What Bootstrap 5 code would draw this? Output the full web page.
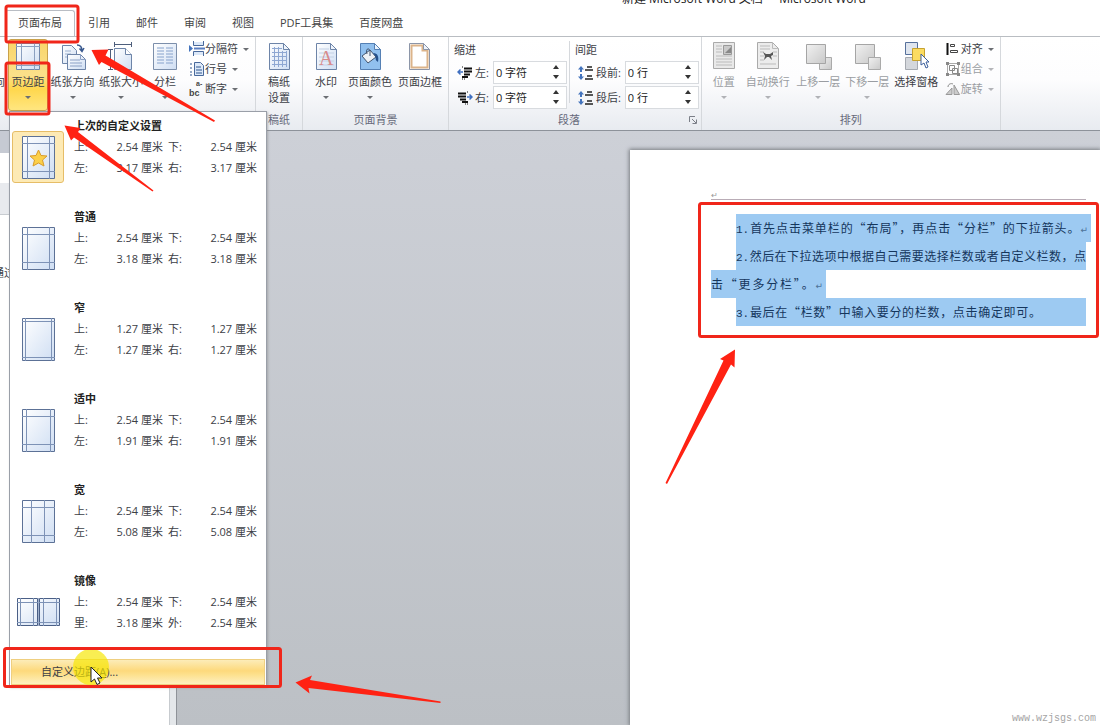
<!DOCTYPE html>
<html lang="zh-CN">
<head>
<meta charset="utf-8">
<meta name="viewport" content="width=device-width, initial-scale=1">
<title>新建 Microsoft Word 文档 - Microsoft Word</title>
<link href="https://cdn.jsdelivr.net/npm/bootstrap@5.3.0/dist/css/bootstrap.min.css" rel="stylesheet">
<style>
body{font-family:"Open Sans","Noto Sans CJK SC",sans-serif;font-size:11px;line-height:16px;color:#3c4046;background:#fff;overflow:hidden}
button{font:inherit;color:inherit;background:none;border:0;padding:0}
svg{display:block;flex:none}
.titleline{height:8px;padding-left:622px;font-size:12px;line-height:18px;color:#222}
.tabs{height:28px;padding:2px 0 0 5px}
.tabs a{padding:0 13px;line-height:26px;color:#444;text-decoration:none;white-space:nowrap}
.tabs a.active{border:1px solid #b9bdc4;border-bottom:0;border-radius:3px 3px 0 0;padding:0 12px;line-height:24px;background:#fff}
.ribbon{border-top:1px solid #b9bdc2;border-bottom:1px solid #8d929a;height:95px;background:linear-gradient(#fff 0,#fdfdfe 45%,#e8ebf0 100%)}
.grp{border-right:1px solid #d5d8dc;padding-top:2px;height:93px}
.grp-body{height:73px}
.caption{line-height:16px;color:#66697a;text-align:center}
.big{width:49px;height:72px;padding-top:1px;display:flex;flex-direction:column;align-items:center;white-space:nowrap}
.big>span{line-height:16px;margin-top:2px}
.big::after,.small-btn::after{content:"";border:3px solid transparent;border-top-color:#6b6e73;border-bottom:0;margin-top:6px}
.big.plain::after{display:none}
.w-cut{width:8px;align-items:flex-end;padding-right:3px;overflow:hidden}
.w-40{width:40px}.w-44{width:44px}.w-46{width:46px}.w-48{width:48px}.w-52{width:52px}
.hot{background:linear-gradient(#f9d568,#fbe08a 50%,#ffd74d 70%,#ffe680);border:1px solid #c9a14a;border-radius:3px;padding-top:0}
.off{color:#9a9da2}
.off::after{opacity:.5}
.small-col{padding:0 6px 0 4px}
.small-btn{display:flex;align-items:center;height:20px;white-space:nowrap}
.small-btn::after{margin:0 0 0 5px}
.bg-body-group{padding:0 2px 0 3px}
.indent-col{padding:1px 2px 0 5px;line-height:20px}
.split{border-left:1px solid #d5d8dc;height:62px;margin-top:2px}
.field{height:23px;margin-bottom:2px;padding-left:3px}
.field:first-of-type{margin-top:1px}
.field label{padding:0 4px 0 2px;line-height:20px;white-space:nowrap}
.spin{width:74px;height:23px;border:1px solid #d8dbdf;background:#fff}
.spin input{width:52px;border:0;padding:0 2px;background:none;color:#222;font:inherit;outline:0}
.spin-btns{width:20px}
.spin-btns button{height:10px;display:flex;align-items:center;justify-content:center}
.stage{background:linear-gradient(#cdd0d7,#bcc0c5)}
.navpane{width:169px;background:linear-gradient(#c6cad3 0 22px,#fff 22px 52px,#e8eaee 52px 83px,#c8ccd1 83px 84px,#fff 84px)}
.navpane p{margin:134px 0 0 -7px}
.splitter{width:8px;background:#e4e7ea;border-left:1px solid #c7cbcf;border-right:1px solid #8e9298}
.paper{flex:0 1 470px;margin-top:19px;background:#fff;padding:40px 9px 0 81px;box-shadow:0 0 4px 1px #777b80}
.doc-head{height:10px;border-bottom:1px solid #b9acb6;margin:0 5px 14px 0;font-size:8px;line-height:10px;color:#999}
.doc{font-family:"Noto Sans CJK SC",sans-serif;font-size:12px;line-height:28px;color:#15365c}
.doc p{margin:0}
.ln{display:block;height:28px;background:#9dcaf2;margin:0 5px 0 25px;text-align:justify;text-align-last:justify;white-space:nowrap}
.ln.wide{margin-right:0;padding-right:3px}
.ln.brk{width:115px;margin-left:0;padding-right:3px}
.ln.short{padding-right:45px}
.ln b{font:11px/26px "Liberation Mono",monospace}
.ln i{font:normal 9px/26px "DejaVu Sans",sans-serif;color:#4c7196}
.gallery{position:absolute;left:9px;top:111px;width:258px;background:#fff;border:1px solid #9a9fa8;padding:3px 0 1px;box-shadow:1px 1px 2px #8888}
.preset{display:flex;width:100%;padding:0 9px 0 2px;margin-bottom:23px;text-align:left;line-height:21px}
.preset.last{margin-bottom:21px}
.thumb{width:52px;height:52px;margin:16px 10px 0 0;display:flex;align-items:center;justify-content:center}
.thumb.sel{background:#fdeab5;border:1px solid #e6bd67;border-radius:3px}
.preset strong{display:block;color:#222}
.vals{display:flex;gap:5px;height:21px}
.vals>span{flex:1;display:flex;justify-content:space-between}
.custom{margin:0 1px;height:26px;text-align:left;padding-left:29px;border:1px solid #efcf80;background:linear-gradient(#fcecb8,#fdd97c 45%,#fde08c 60%,#fef0c0)}
.marks{position:absolute;left:0;top:0;pointer-events:none}
.site{position:absolute;right:4px;bottom:0;font:10px/12px "Liberation Mono",monospace;color:#a5a5a5}
</style>
</head>
<body>
<svg width="0" height="0" class="position-absolute" aria-hidden="true">
<defs>
<linearGradient id="pg" x1="0" y1="0" x2="1" y2="1"><stop offset="0" stop-color="#fff"/><stop offset="1" stop-color="#cfdef3"/></linearGradient>
<linearGradient id="gr" x1="0" y1="0" x2="1" y2="1"><stop offset="0" stop-color="#f1f1f1"/><stop offset="1" stop-color="#c9c9c9"/></linearGradient>
<symbol id="sheet" viewBox="0 0 32 32"><path d="M6.500 3.500h14l6 6v20h-20z" fill="url(#pg)" stroke="#6d84a8"/><path d="M20.500 3.500v6h6z" fill="#eef4fc" stroke="#6d84a8"/></symbol>
<symbol id="ind" viewBox="0 0 16 14"><path d="M5 1h2M5 13h3" stroke="#111" stroke-dasharray="1 1"/><path d="M7 2.500h8M7 5.500h8M7 8.500h6M5 11h6" stroke="#111" stroke-width="2"/><path d="M1 6h5M3.500 3.500L1 6l2.500 2.500" stroke="#3f6fc0" fill="none" stroke-width="1.500"/></symbol>
<symbol id="space" viewBox="0 0 16 16"><path d="M9 2h5M7 5h8M9 11h5M7 14h8" stroke="#222" stroke-width="1.500"/><path d="M0 4.500L3 1l3 3.500zM0 11.500L3 15l3-3.500z" fill="#4474bd"/><path d="M3 4v3M3 9v3" stroke="#4474bd" stroke-width="2"/></symbol>
<symbol id="up" viewBox="0 0 6 4"><path d="M0 4L3 0l3 4z" fill="#333"/></symbol>
<symbol id="dn" viewBox="0 0 6 4"><path d="M0 0h6L3 4z" fill="#333"/></symbol>
</defs>
</svg>

<div class="d-flex flex-column vh-100 position-relative">
<header>
<div class="titleline d-flex align-items-end text-nowrap">新建 Microsoft Word 文档 &nbsp;- &nbsp;Microsoft Word</div>
<nav class="tabs d-flex">
<a href="#" class="active">页面布局</a><a href="#">引用</a><a href="#">邮件</a><a href="#">审阅</a><a href="#">视图</a><a href="#">PDF工具集</a><a href="#">百度网盘</a>
</nav>
</header>

<div class="ribbon d-flex flex-shrink-0">
<section class="grp">
<div class="grp-body d-flex">
<button class="big w-cut plain"><svg width="32" height="32"></svg><span>文字方向</span></button>
<button class="big w-40 hot"><svg width="32" height="32"><path d="M4.500 3.500h23v26h-23z" fill="url(#pg)" stroke="#7288aa"/><path d="M9.500 3v27M22.500 3v27M4 6.500h24M4 25.500h24" stroke="#8ba0c0"/></svg><span>页边距</span></button>
<button class="big"><svg width="32" height="32"><path d="M5.500 5.500h9l5 5v13h-14z" fill="url(#pg)" stroke="#6d84a8"/><path d="M8 11h6M8 14h6M8 17h4" stroke="#9fb3d0"/><path d="M10.500 14.500h13l5 5v10h-18z" fill="url(#pg)" stroke="#6d84a8"/><path d="M23.500 14.500v5h5M13 20h10M13 23h12M13 26h12" fill="none" stroke="#8ba0c5"/><path d="M20 5c4 0 5 3 5 6M22.500 8.500l2.500 3 2-3.500" fill="none" stroke="#38588e" stroke-width="1.500"/></svg><span>纸张方向</span></button>
<button class="big w-48"><svg width="32" height="32"><path d="M9.500 8.500h11l6 6v15h-17z" fill="url(#pg)" stroke="#6d84a8"/><path d="M20.500 8.500v6h6" fill="#fff" stroke="#6d84a8"/><path d="M9 4.500h17M9.500 2v5M26.500 2v5M5.500 9v20M3 9.500h5M3 29.500h5" stroke="#4d5e7c"/></svg><span>纸张大小</span></button>
<button class="big w-40"><svg width="32" height="32"><path d="M4.500 3.500h23v26h-23z" fill="url(#pg)" stroke="#7c8fab"/><path d="M8 8h7M8 11h7M8 14h7M8 17h7M8 20h7M8 23h7M17 8h7M17 11h7M17 14h7M17 17h7M17 20h7M17 23h7" stroke="#86a2cc"/></svg><span>分栏</span></button>
<div class="small-col">
<button class="small-btn"><svg width="16" height="16"><path d="M5 1h10v4H5zM5 10h10v4H5z" fill="#dce8f8"/><path d="M4.500 0v4.500h10V0M4.500 15v-4.500h10V15" fill="none" stroke="#49699b"/><path d="M5 7.500h11" stroke="#5a7ec0" stroke-width="2"/><path d="M0 4l4 3.500L0 11z" fill="#4474bd"/></svg>分隔符</button>
<button class="small-btn"><svg width="16" height="16"><path d="M5.500 1.500h6l3 3v10h-9z" fill="#dce8f8" stroke="#49699b"/><path d="M7 6h5M7 9h6M7 12h6M1 3h2M1 7h2M1 11h2M1 14h2" stroke="#31568f"/></svg>行号</button>
<button class="small-btn"><svg width="16" height="16" font-family="Liberation Sans" font-weight="bold" fill="#444"><text x="0" y="15" font-size="9">bc</text><text x="7" y="5" font-size="7">a-</text></svg>断字</button>
</div>
</div>
</section>
<section class="grp">
<div class="grp-body d-flex"><button class="big w-46 plain"><svg width="32" height="32"><use href="#sheet"/><path d="M9 8.500h10M9 12.500h15M9 16.500h15M9 20.500h15M9 24.500h15M11.500 7v20M15.500 7v20M19.500 11v16M23.500 11v16" stroke="#8ea7d2"/></svg><span>稿纸<br>设置</span></button></div>
<div class="caption">稿纸</div>
</section>
<section class="grp">
<div class="grp-body bg-body-group d-flex">
<button class="big w-40"><svg width="32" height="32"><use href="#sheet"/><path d="M9 9h10M9 13h15M9 17h15M9 21h15M9 25h15" stroke="#c3d0e4"/><text x="9" y="25" font-family="Liberation Serif" font-size="20" fill="#d88b8b">A</text></svg><span>水印</span></button>
<button class="big w-48"><svg width="32" height="32"><path d="M6.500 3.500h14l6 6v20h-20z" fill="#91c0ee" stroke="#5580b4"/><path d="M20.500 3.500v6h6z" fill="#e9f3fd" stroke="#5580b4"/><path d="M8 16l8-6 6 7-8 6z" fill="#eef1f5" stroke="#42546e"/><path d="M13 14c-2-5 2-7 3-3v5" fill="none" stroke="#42546e"/><path d="M19 13c5 0 6 4 5 9-2-1-3-3-2-5z" fill="#244f8a"/></svg><span>页面颜色</span></button>
<button class="big w-52 plain"><svg width="32" height="32"><path d="M5.500 3.500h14l6 6v20h-20z" fill="#fff" stroke="#8b95a8"/><path d="M7.500 5.500h11v5h5v17h-16z" fill="#fff" stroke="#dcb48a" stroke-width="2"/><path d="M19.500 3.500v6h6z" fill="#eef4fc" stroke="#8b95a8"/></svg><span>页面边框</span></button>
</div>
<div class="caption">页面背景</div>
</section>
<section class="grp">
<div class="grp-body d-flex">
<div class="indent-col">缩进
<div class="field d-flex align-items-center"><svg width="16" height="14"><use href="#ind"/></svg><label for="il">左:</label><div class="spin d-flex"><input id="il" value="0 字符"><div class="spin-btns"><button class="w-100" aria-label="增加"><svg width="6" height="4"><use href="#up"/></svg></button><button class="w-100" aria-label="减少"><svg width="6" height="4"><use href="#dn"/></svg></button></div></div></div>
<div class="field d-flex align-items-center"><svg width="16" height="14"><g transform="translate(16 0) scale(-1 1)"><use href="#ind"/></g></svg><label for="ir">右:</label><div class="spin d-flex"><input id="ir" value="0 字符"><div class="spin-btns"><button class="w-100" aria-label="增加"><svg width="6" height="4"><use href="#up"/></svg></button><button class="w-100" aria-label="减少"><svg width="6" height="4"><use href="#dn"/></svg></button></div></div></div>
</div>
<div class="split"></div>
<div class="indent-col">间距
<div class="field d-flex align-items-center"><svg width="16" height="16"><use href="#space"/></svg><label for="sb">段前:</label><div class="spin d-flex"><input id="sb" value="0 行"><div class="spin-btns"><button class="w-100" aria-label="增加"><svg width="6" height="4"><use href="#up"/></svg></button><button class="w-100" aria-label="减少"><svg width="6" height="4"><use href="#dn"/></svg></button></div></div></div>
<div class="field d-flex align-items-center"><svg width="16" height="16"><use href="#space"/></svg><label for="sa">段后:</label><div class="spin d-flex"><input id="sa" value="0 行"><div class="spin-btns"><button class="w-100" aria-label="增加"><svg width="6" height="4"><use href="#up"/></svg></button><button class="w-100" aria-label="减少"><svg width="6" height="4"><use href="#dn"/></svg></button></div></div></div>
</div>
</div>
<div class="caption d-flex align-items-center pe-1"><span class="flex-fill">段落</span><button aria-label="段落设置"><svg width="8" height="8"><path d="M.5 6V.5H6M3 3l4 4M7.500 3.500v4h-4" fill="none" stroke="#7b7f88"/></svg></button></div>
</section>
<section class="grp">
<div class="grp-body d-flex">
<button class="big w-44 off"><svg width="32" height="32"><path d="M5.500 2.500h21v26h-21z" fill="#e9e9e9" stroke="#aaa"/><path d="M8 6h6M8 9h6M8 12h6M8 16h16M8 19h16M8 22h16M8 25h16" stroke="#bbb"/><path d="M15.500 5.500h8v9h-8z" fill="#c9c9c9" stroke="#999"/><path d="M17 13l6-6v6z" fill="#888"/></svg><span>位置</span></button>
<button class="big w-44 off"><svg width="32" height="32"><path d="M5.500 2.500h15l6 6v20h-21z" fill="#ececec" stroke="#aaa"/><path d="M20.500 2.500v6h6M8 6h10M8 9h10M8 12h4M8 16h4M8 20h4M8 24h16M21 12h4M21 16h4" fill="none" stroke="#bbb"/><path d="M11 12l3 2h4l3-2v3l-2 1 1 4-3-3h-2l-3 3 1-4z" fill="#555"/></svg><span>自动换行</span></button>
<button class="big off ms-1"><svg width="32" height="32"><path d="M17.500 17.500h12v12h-12z" fill="url(#gr)" stroke="#aaa"/><path d="M4.500 4.500h19v19h-19z" fill="url(#gr)" stroke="#a5a5a5"/></svg><span>上移一层</span></button>
<button class="big off"><svg width="32" height="32"><path d="M4.500 4.500h19v19h-19z" fill="url(#gr)" stroke="#a5a5a5"/><path d="M17.500 17.500h12v12h-12z" fill="url(#gr)" stroke="#aaa"/></svg><span>下移一层</span></button>
<button class="big plain"><svg width="32" height="32"><path d="M5.500 2.500h12v12h-12z" fill="#dfe5ee" stroke="#56709b"/><path d="M5.500 17.500h12v12h-12z" fill="#d4d7dc" stroke="#a5a9b0"/><path d="M12.500 8.500h12v12h-12z" fill="#fbdc62" stroke="#c7a22f"/><path d="M21 14v11l3-2 2 5 2-1-2-5h3z" fill="#fff" stroke="#3c5f9c"/></svg><span>选择窗格</span></button>
<div class="small-col">
<button class="small-btn"><svg width="16" height="16"><path d="M2.500 2v12" stroke="#111" stroke-width="2"/><path d="M5.500 3.500h4v2h-4zM5.500 9.500h7v2h-7z" fill="#fff" stroke="#444"/></svg>对齐</button>
<button class="small-btn off"><svg width="16" height="16"><path d="M2.500 2.500h11v11h-11z" fill="none" stroke="#aaa"/><path d="M4.500 4.500h5v5h-5zM7.500 7.500h5v5h-5z" fill="none" stroke="#888"/><path d="M1 1h3v3H1zM12 1h3v3h-3zM1 12h3v3H1zM12 12h3v3h-3z" fill="#888"/></svg>组合</button>
<button class="small-btn off"><svg width="16" height="16"><path d="M1 13.500h6V7zM9 13.500V4l5.500 9.500z" fill="#ccc" stroke="#999"/><path d="M3 6c0-3 3-4 5-3" fill="none" stroke="#888"/></svg>旋转</button>
</div>
</div>
<div class="caption">排列</div>
</section>
</div>

<main class="stage d-flex flex-fill overflow-hidden">
<aside class="navpane flex-shrink-0 overflow-hidden"><p>通过</p></aside>
<div class="splitter flex-shrink-0"></div>
<article class="paper ms-auto">
<div class="doc-head">↵</div>
<div class="doc">
<p><span class="ln wide"><b>1.</b>首先点击菜单栏的“布局”，再点击“分栏”的下拉箭头。<i>↵</i></span></p>
<p><span class="ln"><b>2.</b>然后在下拉选项中根据自己需要选择栏数或者自定义栏数，点</span><span class="ln brk">击“更多分栏”。<i>↵</i></span></p>
<p><span class="ln short"><b>3.</b>最后在“栏数”中输入要分的栏数，点击确定即可。</span></p>
</div>
</article>
</main>

<div class="gallery">
<button class="preset"><span class="thumb sel"><svg width="33" height="43"><path d="M.5.5h32v42H.5z" fill="url(#pg)" stroke="#5c7196"/><path d="M5.500 0v43M27.500 0v43M0 7.500h33M0 35.500h33" stroke="#7d92b6"/><path d="M16.500 14l2.500 5.500 6 .5-4.500 4 1.500 6-5.500-3-5.500 3 1.500-6-4.500-4 6-.5z" fill="#fcd04a" stroke="#d89c2c"/></svg></span><span class="flex-fill"><strong>上次的自定义设置</strong><span class="vals"><span><i class="fst-normal">上:</i><i class="fst-normal">2.54 厘米</i></span><span><i class="fst-normal">下:</i><i class="fst-normal">2.54 厘米</i></span></span><span class="vals"><span><i class="fst-normal">左:</i><i class="fst-normal">3.17 厘米</i></span><span><i class="fst-normal">右:</i><i class="fst-normal">3.17 厘米</i></span></span></span></button>
<button class="preset"><span class="thumb"><svg width="33" height="43"><path d="M.5.5h32v42H.5z" fill="url(#pg)" stroke="#5c7196"/><path d="M5.500 0v43M27.500 0v43M0 7.500h33M0 35.500h33" stroke="#7d92b6"/></svg></span><span class="flex-fill"><strong>普通</strong><span class="vals"><span><i class="fst-normal">上:</i><i class="fst-normal">2.54 厘米</i></span><span><i class="fst-normal">下:</i><i class="fst-normal">2.54 厘米</i></span></span><span class="vals"><span><i class="fst-normal">左:</i><i class="fst-normal">3.18 厘米</i></span><span><i class="fst-normal">右:</i><i class="fst-normal">3.18 厘米</i></span></span></span></button>
<button class="preset"><span class="thumb"><svg width="33" height="43"><path d="M.5.5h32v42H.5z" fill="url(#pg)" stroke="#5c7196"/><path d="M3.500 0v43M29.500 0v43M0 3.500h33M0 39.500h33" stroke="#7d92b6"/></svg></span><span class="flex-fill"><strong>窄</strong><span class="vals"><span><i class="fst-normal">上:</i><i class="fst-normal">1.27 厘米</i></span><span><i class="fst-normal">下:</i><i class="fst-normal">1.27 厘米</i></span></span><span class="vals"><span><i class="fst-normal">左:</i><i class="fst-normal">1.27 厘米</i></span><span><i class="fst-normal">右:</i><i class="fst-normal">1.27 厘米</i></span></span></span></button>
<button class="preset"><span class="thumb"><svg width="33" height="43"><path d="M.5.5h32v42H.5z" fill="url(#pg)" stroke="#5c7196"/><path d="M4.500 0v43M28.500 0v43M0 7.500h33M0 35.500h33" stroke="#7d92b6"/></svg></span><span class="flex-fill"><strong>适中</strong><span class="vals"><span><i class="fst-normal">上:</i><i class="fst-normal">2.54 厘米</i></span><span><i class="fst-normal">下:</i><i class="fst-normal">2.54 厘米</i></span></span><span class="vals"><span><i class="fst-normal">左:</i><i class="fst-normal">1.91 厘米</i></span><span><i class="fst-normal">右:</i><i class="fst-normal">1.91 厘米</i></span></span></span></button>
<button class="preset"><span class="thumb"><svg width="33" height="43"><path d="M.5.5h32v42H.5z" fill="url(#pg)" stroke="#5c7196"/><path d="M9.500 0v43M22.500 0v43M0 7.500h33M0 35.500h33" stroke="#7d92b6"/></svg></span><span class="flex-fill"><strong>宽</strong><span class="vals"><span><i class="fst-normal">上:</i><i class="fst-normal">2.54 厘米</i></span><span><i class="fst-normal">下:</i><i class="fst-normal">2.54 厘米</i></span></span><span class="vals"><span><i class="fst-normal">左:</i><i class="fst-normal">5.08 厘米</i></span><span><i class="fst-normal">右:</i><i class="fst-normal">5.08 厘米</i></span></span></span></button>
<button class="preset last"><span class="thumb"><svg width="43" height="28"><path d="M.5.5h20v27H.5zM22.500.5h20v27h-20z" fill="url(#pg)" stroke="#4a5f86"/><path d="M3.500 0v28M16.500 0v28M26.500 0v28M39.500 0v28M0 4.500h43M0 24.500h43" stroke="#7d92b6"/><path d="M21.500 0v28" stroke="#9fb0cc"/></svg></span><span class="flex-fill"><strong>镜像</strong><span class="vals"><span><i class="fst-normal">上:</i><i class="fst-normal">2.54 厘米</i></span><span><i class="fst-normal">下:</i><i class="fst-normal">2.54 厘米</i></span></span><span class="vals"><span><i class="fst-normal">里:</i><i class="fst-normal">3.18 厘米</i></span><span><i class="fst-normal">外:</i><i class="fst-normal">2.54 厘米</i></span></span></span></button>
<div class="d-grid"><button class="custom">自定义边距(<u>A</u>)...</button></div>
</div>

<svg class="marks" width="1100" height="725" aria-hidden="true">
<circle cx="91" cy="667" r="18" fill="#f6e600" fill-opacity=".68"/>
<path d="M91 667v15l3.500-3 2.500 5.500 3-1.500-2.500-5h4.500z" fill="#fff" stroke="#222"/>
<g fill="none" stroke="#f0261a" stroke-width="3"><rect x="6" y="6" width="72" height="36" rx="2"/><rect x="6" y="63" width="43" height="51" rx="2"/><rect x="4.500" y="648.500" width="276" height="38" rx="2"/><rect x="699.500" y="203.500" width="398" height="133" rx="2"/></g>
<g fill="#ff2213"><path d="M91.500 50l17-.5-3 6L215 120.500l-1 1.500L101.500 62l-2.500 3z"/><path d="M64.500 125.500l16 2.500-2.500 4 75.500 58.500-1 1L74 137.500l-3 3z"/><path d="M735 349.500l-15 9.500 3.500 1.500-58 122.500 1.500 1 64-119.500 3.500 3z"/><path d="M295.500 682.500l16.500-7-2 4.500 130.500 21.500v1.500L308.500 688l1 5.500z"/></g>
</svg>
<div class="site">www.wzjsgs.com</div>
</div>
<script src="https://cdn.jsdelivr.net/npm/bootstrap@5.3.0/dist/js/bootstrap.bundle.min.js"></script>
</body>
</html>
